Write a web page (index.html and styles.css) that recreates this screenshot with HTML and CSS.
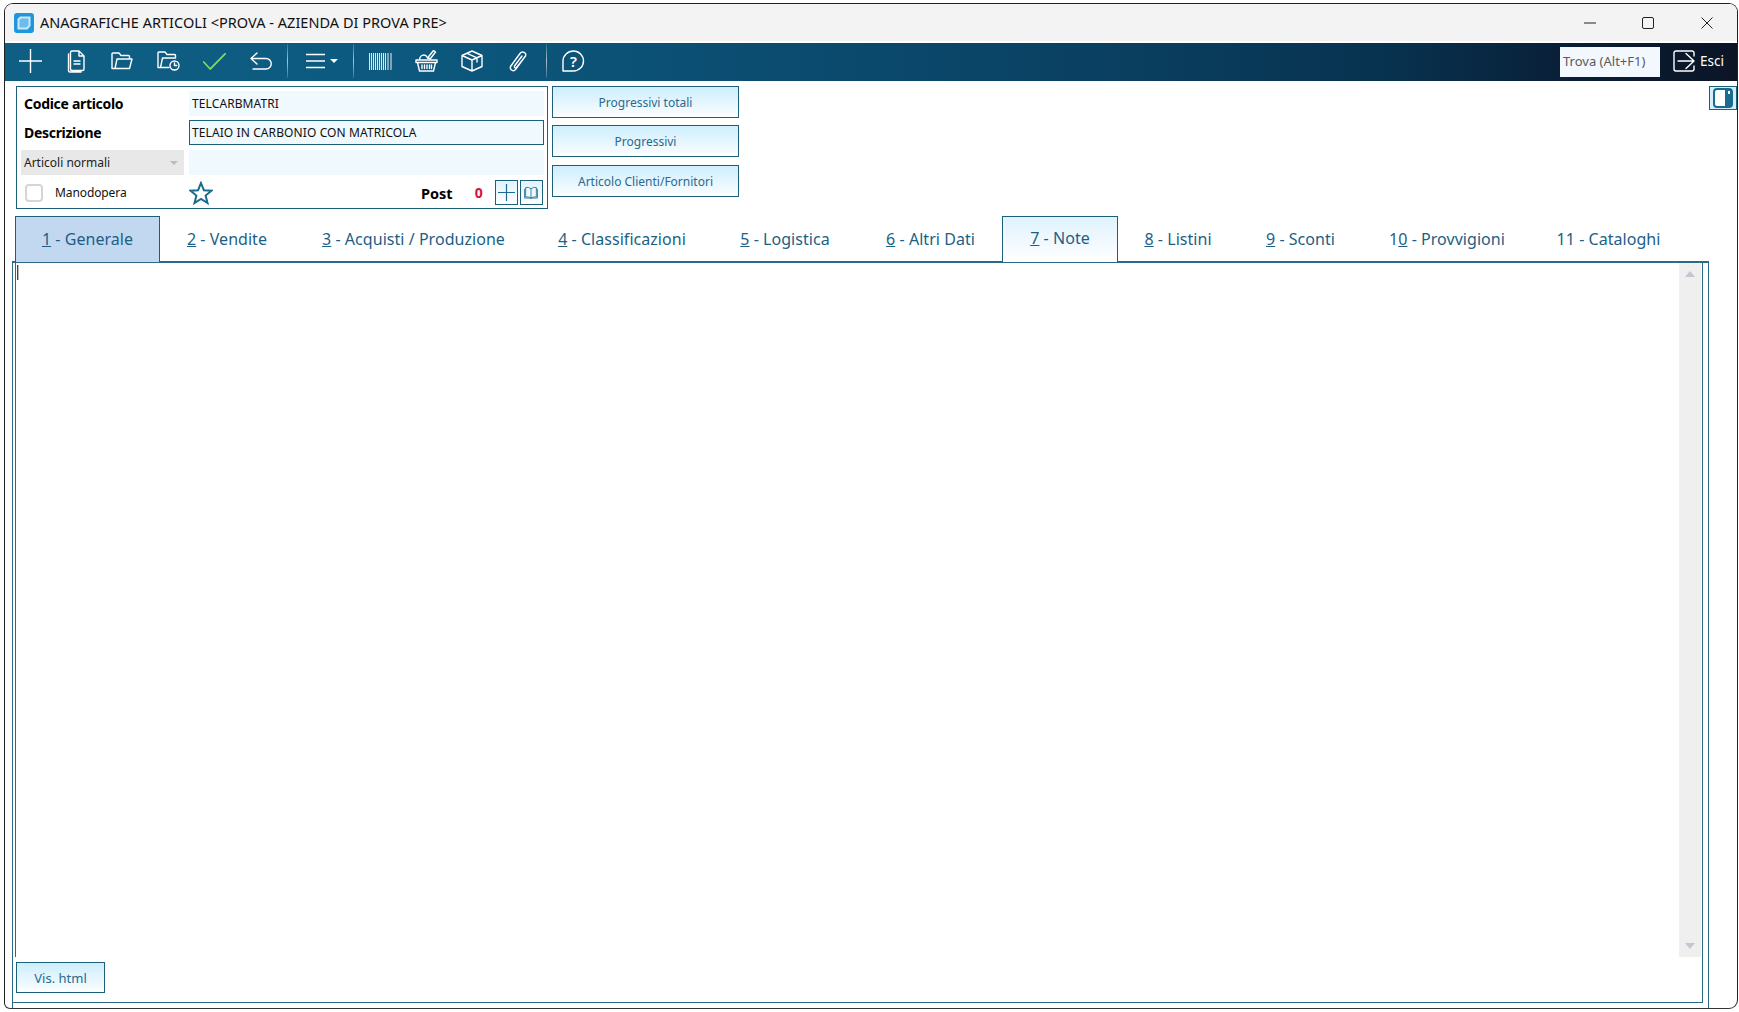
FILE: index.html
```html
<!DOCTYPE html>
<html lang="it">
<head>
<meta charset="utf-8">
<title>Anagrafiche articoli</title>
<link rel="stylesheet" href="styles.css">
</head>
<body>
<div class="window">
  <header class="titlebar">
    <svg class="logo" viewBox="0 0 20 20"><rect width="20" height="20" rx="3" fill="#1f97dd"/><path d="M6 3.500h10.500v9.500l-3 3.500H3.500V6z" fill="#c9e9f9"/><path d="M7 5.500h7.500v7l-2 2H5.500V7z" fill="#6cbdea"/></svg>
    <span class="title-text">ANAGRAFICHE ARTICOLI &lt;PROVA - AZIENDA DI PROVA PRE&gt;</span>
    <div class="win-controls">
      <svg class="wc wc-min" viewBox="0 0 12 12"><path d="M0 6h12" stroke="#222" fill="none"/></svg>
      <svg class="wc wc-max" viewBox="0 0 12 12"><rect x=".5" y=".5" width="11" height="11" rx="1.500" stroke="#222" fill="none"/></svg>
      <svg class="wc wc-close" viewBox="0 0 12 12"><path d="M.5.500l11 11M11.500.500l-11 11" stroke="#222" fill="none"/></svg>
    </div>
  </header>

  <nav class="toolbar">
    <svg class="ic ic-plus" viewBox="0 0 23 24"><path d="M11.500 0v24M0 12h23"/></svg>
    <svg class="ic ic-doc" viewBox="0 0 19 23"><path d="M6 1h7l5 5v13a1.500 1.500 0 0 1-1.500 1.500H6A1.500 1.500 0 0 1 4.500 19V2.500A1.500 1.500 0 0 1 6 1zM13 1v5h5M2.500 4v16.500A1.500 1.500 0 0 0 4 22h11M8 11h6M8 14h6"/></svg>
    <svg class="ic ic-folder" viewBox="0 0 22 18"><path d="M4 16.500H1V2a1 1 0 0 1 1-1h6l2 2.500h7.500a1 1 0 0 1 1 1V7M4 16.500L6 7h15l-2.500 9.500z"/></svg>
    <svg class="ic ic-fclock" viewBox="0 0 23 20"><path d="M12 16.500H3.500H1V2a1 1 0 0 1 1-1h6l2 2.500h7.500a1 1 0 0 1 1 1V7M3.500 16.500L5.500 7H18"/><circle cx="17.500" cy="14.500" r="4.500"/><path d="M17.500 12v2.500h2.200"/></svg>
    <svg class="ic ic-check" viewBox="0 0 23 17"><path class="green" d="M.7 9l6.500 7L22.300.7"/></svg>
    <svg class="ic ic-undo" viewBox="0 0 22 18"><path d="M7 1L1 6.500l6 5.500M1 6.500h15a5 5 0 0 1 0 10.500H3"/></svg>
    <span class="tb-sep sep-a"></span>
    <svg class="ic ic-menu" viewBox="0 0 19 16"><path d="M0 1.500h19M0 8h19M0 14.500h19"/></svg>
    <span class="caret-down"></span>
    <span class="tb-sep sep-b"></span>
    <svg class="ic ic-barcode" viewBox="0 0 23 17"><path class="bars" d="M.5 0v17M2.500 0v17M4.500 0v17M6.500 0v17M8.500 0v17M10.500 0v17M12.500 0v17M14.500 0v17M16.500 0v17M19 0v17M22 0v17"/></svg>
    <svg class="ic ic-basket" viewBox="0 0 23 22"><path d="M1 10h21v2.500H1zM2.500 12.500l2 8.500h14l2-8.500M7 15v3.500M9.500 15v3.500M12 15v3.500M14.500 15v3.500M16.500 15v3.500M4.500 10c0-3 2-5 4.500-5s3 2 3.500 3M12.500 8l6-7.500 2 1.500-5 6.500z"/></svg>
    <svg class="ic ic-box" viewBox="0 0 22 22"><path d="M11 1l10 4.500v11L11 21 1 16.500v-11zM1 5.500L11 10l10-4.500M11 10v11M6 3.300l10 4.500V12"/></svg>
    <svg class="ic ic-clip" viewBox="0 0 20 23"><path d="M16 8L7.500 19.500c-2 2.500-6 .5-5-3L12 3.500c2-2.800 7-1 5.500 2.500L8.500 17.500c-1 1-2.500 0-2-1.500l7.500-10"/></svg>
    <span class="tb-sep sep-c"></span>
    <span class="help"><svg class="ic ic-help" viewBox="0 0 23 22"><path d="M11.500 1a10 10 0 0 1 0 20H1v-10A10.500 10 0 0 1 11.500 1z"/></svg><b class="help-q">?</b></span>
    <span class="tb-spring"></span>
    <span class="search">Trova (Alt+F1)</span>
    <svg class="ic ic-exit" viewBox="0 0 22 22"><path d="M21 6V3a2 2 0 0 0-2-2H3a2 2 0 0 0-2 2v16a2 2 0 0 0 2 2h16a2 2 0 0 0 2-2v-3M5 11h16M13 3.500L21 11l-8 7.500"/></svg>
    <span class="exit-label">Esci</span>
  </nav>

  <section class="top">
    <div class="panel">
      <div class="row row-first">
        <label class="lbl">Codice articolo</label>
        <div class="field">TELCARBMATRI</div>
      </div>
      <div class="row row-second">
        <label class="lbl">Descrizione</label>
        <div class="field field-edit">TELAIO IN CARBONIO CON MATRICOLA</div>
      </div>
      <div class="row">
        <div class="combo"><span>Articoli normali</span><i class="combo-arrow"></i></div>
        <div class="field"></div>
      </div>
      <div class="row">
        <span class="check"></span>
        <span class="check-label">Manodopera</span>
        <svg class="star" viewBox="0 0 24 24"><path d="M12 2l2.900 7.200 7.600.5-5.900 4.900 1.900 7.400-6.500-4.100-6.500 4.100 1.900-7.400L1.500 9.700l7.600-.5z"/></svg>
        <span class="post">Post</span>
        <span class="post-n">0</span>
        <span class="mini"><svg viewBox="0 0 17 17"><path d="M8.500 0v17M0 8.500h17"/></svg></span>
        <span class="mini mini-b"><svg class="book" viewBox="0 0 17 15"><path d="M8.500 3C7 1.500 4 1 2 1.500V13c2-.5 5 0 6.500 1.500C10 13 13 12.500 15 13V1.500C13 1 10 1.500 8.500 3zM8.500 3v11.500M2 3.500H.7V14.300h15.600V3.500H15"/></svg></span>
      </div>
    </div>
    <div class="side-buttons">
      <button class="btn">Progressivi totali</button>
      <button class="btn btn-2">Progressivi</button>
      <button class="btn btn-3">Articolo Clienti/Fornitori</button>
    </div>
    <span class="spring"></span>
    <span class="layout-btn"><svg viewBox="0 0 20 20"><rect x="1" y="1" width="18" height="18" rx="3" fill="#fff" stroke="#1b6a8f" stroke-width="2"/><path d="M12 1h4a3 3 0 0 1 3 3v12a3 3 0 0 1-3 3h-4z" fill="#1b6a8f"/><rect x="15" y="3" width="2" height="3" fill="#fff"/></svg></span>
  </section>

  <div class="tabs">
    <div class="tab tab-sel"><span><u>1</u> - Generale</span></div>
    <div class="tab"><span><u>2</u> - Vendite</span></div>
    <div class="tab"><span><u>3</u> - Acquisti / Produzione</span></div>
    <div class="tab"><span><u>4</u> - Classificazioni</span></div>
    <div class="tab"><span><u>5</u> - Logistica</span></div>
    <div class="tab"><span><u>6</u> - Altri Dati</span></div>
    <div class="tab tab-active"><span><u>7</u> - Note</span></div>
    <div class="tab"><span><u>8</u> - Listini</span></div>
    <div class="tab"><span><u>9</u> - Sconti</span></div>
    <div class="tab"><span>1<u>0</u> - Provvigioni</span></div>
    <div class="tab"><span>11 - Cataloghi</span></div>
  </div>

  <main class="content">
    <div class="inner">
      <div class="editor">
        <div class="text-area"><span class="text-caret"></span></div>
        <div class="scrollbar"><i class="arrow-up"></i><i class="arrow-down"></i></div>
      </div>
      <div class="actions"><button class="btn btn-vis">Vis. html</button></div>
    </div>
  </main>
</div>
</body>
</html>
```

FILE: styles.css
```css
* { box-sizing: border-box; }
html, body { margin: 0; padding: 0; background: #fff; overflow: hidden; }
body { font-family: "Noto Sans", "Open Sans", sans-serif; color: #000; height: 1012px; padding: 3px 1px 0 4px; }

.window { width: 1734px; height: 1006px; border: 1px solid #222; border-bottom-color: #333; border-radius: 9px 9px 9px 6px; display: flex; flex-direction: column; overflow: hidden; background: #fff; }

.titlebar { height: 37px; flex: none; background: #f3f3f3; display: flex; align-items: center; padding-left: 9px; margin-bottom: 2px; }
.logo { width: 20px; height: 20px; flex: none; }
.title-text { margin-left: 6px; padding-bottom: 2px; font-size: 14.500px; letter-spacing: .03px; color: #111; white-space: nowrap; }
.win-controls { margin-left: auto; display: flex; align-items: center; height: 100%; }
.wc { width: 12px; height: 12px; display: block; }
.wc-min { margin-right: 46px; }
.wc-max { margin-right: 47px; }
.wc-close { margin-right: 24px; }

.toolbar { height: 38px; flex: none; display: flex; align-items: center; position: relative; padding-left: 14px; padding-bottom: 2px; background: linear-gradient(90deg, #0f5f85 0%, #0d5a80 20%, #0b4c70 45%, #0a3f60 65%, #07324f 80%, #0a1c33 92%, #0b1526 100%); }
.ic { display: block; flex: none; fill: none; stroke: #fff; stroke-width: 1.400; stroke-linejoin: round; stroke-linecap: round; }
.ic .green { stroke: #7fd857; stroke-width: 1.800; }
.ic .bars { stroke: #d9e6ee; stroke-width: 1.100; stroke-linecap: butt; }
.ic-plus { width: 23px; height: 24px; }
.ic-doc { width: 19px; height: 23px; margin-left: 24px; }
.ic-folder { width: 22px; height: 18px; margin-left: 26px; }
.ic-fclock { width: 23px; height: 20px; margin-left: 24px; }
.ic-check { width: 23px; height: 17px; margin-left: 23px; }
.ic-undo { width: 22px; height: 18px; margin-left: 24px; }
.tb-sep { width: 1px; height: 34px; background: linear-gradient(180deg, rgba(255,255,255,.15), rgba(255,255,255,.65) 50%, rgba(255,255,255,.15)); flex: none; }
.sep-a { margin-left: 15px; }
.ic-menu { width: 19px; height: 16px; margin-left: 18px; }
.caret-down { width: 0; height: 0; border: 4px solid transparent; border-top: 4px solid #fff; border-bottom: 0; margin-left: 5px; flex: none; }
.sep-b { margin-left: 15px; }
.ic-barcode { width: 23px; height: 17px; margin-left: 15px; }
.ic-basket { width: 23px; height: 22px; margin-left: 23px; }
.ic-box { width: 22px; height: 22px; margin-left: 23px; }
.ic-clip { width: 20px; height: 23px; margin-left: 25px; }
.sep-c { margin-left: 18px; }
.help { position: relative; margin-left: 15px; display: block; flex: none; }
.ic-help { width: 23px; height: 22px; }
.help-q { position: absolute; left: 0; right: 0; top: 0; text-align: center; color: #fff; font-size: 15px; line-height: 22px; font-weight: 600; }
.tb-spring { flex: 1; }
.search { width: 100px; height: 30px; margin-top: 2px; background: #f2f8fd; color: #5a5a5a; font-size: 13px; line-height: 28px; padding-left: 3px; white-space: nowrap; overflow: hidden; flex: none; }
.ic-exit { width: 22px; height: 22px; margin-left: 13px; }
.exit-label { color: #fff; font-size: 13.500px; margin-left: 5px; margin-right: 13px; width: 24px; }

.top { height: 135px; flex: none; display: flex; align-items: flex-start; padding-top: 5px; padding-left: 11px; }
.panel { width: 532px; height: 123px; border: 1px solid #1c6079; padding: 4px 3px 0 4px; flex: none; }
.row { height: 25px; margin-top: 5px; display: flex; align-items: center; position: relative; }
.row-first { margin-top: 0; }
.row-second { margin-top: 4px; }
.lbl { width: 168px; padding-left: 3px; font-weight: 700; font-size: 14px; letter-spacing: -.3px; flex: none; }
.field { width: 355px; height: 25px; background: #f0f9fe; font-size: 12px; line-height: 25px; padding-left: 3px; letter-spacing: .1px; white-space: nowrap; color: #111; flex: none; }
.field-edit { border: 1px solid #1c6079; padding-left: 2px; line-height: 24px; }
.combo { width: 163px; height: 25px; background: #e8e8e8; font-size: 12px; padding-left: 3px; margin-right: 5px; display: flex; align-items: center; justify-content: space-between; color: #222; flex: none; }
.combo-arrow { width: 0; height: 0; border: 4px solid transparent; border-top: 4px solid #bbb; border-bottom: 0; margin-right: 6px; }
.check { width: 18px; height: 18px; border: 2px solid #d5d5d5; border-radius: 4px; background: #fff; margin-left: 4px; flex: none; }
.check-label { font-size: 12px; margin-left: 12px; width: 134px; letter-spacing: -.1px; color: #111; flex: none; }
.star { width: 24px; height: 24px; fill: none; stroke: #1b6a8f; stroke-width: 2; flex: none; }
.post { font-weight: 700; font-size: 14.500px; margin-left: 208px; flex: none; }
.post-n { font-weight: 700; font-size: 14px; color: #d6123c; margin-left: 22px; width: 10px; flex: none; }
.mini { width: 23px; height: 25px; border: 1px solid #1c6079; margin-left: 10px; background: linear-gradient(180deg, #e0f3fd, #fff); display: flex; align-items: center; justify-content: center; flex: none; }
.mini svg { width: 17px; height: 17px; fill: none; stroke: #1b6a8f; stroke-width: 1.200; display: block; }
.mini .book { width: 14px; height: 13px; stroke-width: 1; }
.mini-b { margin-left: 2px; }

.side-buttons { margin-left: 4px; width: 187px; display: flex; flex-direction: column; flex: none; }
.btn { height: 32px; width: 187px; border: 1px solid #1c6079; background: linear-gradient(180deg, #cdeefd 0%, #f4fbff 85%, #fff 100%); color: #2a6a8e; font-family: inherit; font-size: 12px; padding: 0; letter-spacing: 0; display: block; }
.btn-2 { margin-top: 7px; }
.btn-3 { margin-top: 8px; }
.spring { flex: 1; }
.layout-btn { width: 28px; height: 24px; border: 1px solid #1c6079; background: #d6eefb; display: flex; align-items: center; justify-content: center; flex: none; }
.layout-btn svg { width: 20px; height: 20px; display: block; }

.tabs { height: 46px; flex: none; margin-left: 10px; display: grid; grid-template-columns: 145px 134px 239px 178px 148px 143px 116px 120px 125px 168px 155px; position: relative; z-index: 1; }
.tab { display: flex; align-items: center; justify-content: center; font-size: 16px; color: #1c5f85; letter-spacing: .04px; white-space: nowrap; padding-bottom: 1px; }
.tab-sel { background: #c2d8f0; border: 1px solid #1c6079; border-bottom: 0; }
.tab-active { background: linear-gradient(180deg, #dff2fd, #fff); border: 1px solid #1c6079; border-bottom: 0; padding-bottom: 3px; }

.content { flex: 1; margin-left: 7px; width: 1697px; margin-top: -1px; border-top: 2px solid #2b6a86; border-left: 1px solid #2b6a86; border-right: 1px solid #2b6a86; padding-right: 5px; padding-bottom: 5px; display: flex; background: #fff; }
.inner { flex: 1; border-right: 1px solid #2b6a86; border-bottom: 1px solid #2b6a86; display: flex; flex-direction: column; min-width: 0; }
.editor { flex: 1; display: flex; margin-left: 2px; border-left: 1px solid #2b6a86; padding-right: 1px; }
.text-area { flex: 1; padding: 2px 0 0 1px; }
.text-caret { display: block; width: 2px; height: 15px; background: #445; border-right: 1px solid #bbb; }
.scrollbar { width: 22px; background: #efefef; position: relative; flex: none; }
.arrow-up, .arrow-down { position: absolute; left: 6px; width: 0; height: 0; border-left: 5px solid transparent; border-right: 5px solid transparent; }
.arrow-up { top: 8px; border-bottom: 6px solid #c3c7cf; }
.arrow-down { bottom: 8px; border-top: 6px solid #c3c7cf; }
.actions { flex: none; height: 45px; padding: 5px 0 0 3px; }
.btn-vis { width: 89px; height: 31px; font-size: 13px; }
```
